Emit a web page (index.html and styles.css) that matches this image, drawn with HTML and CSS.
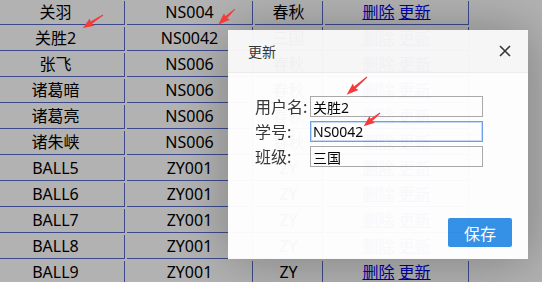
FILE: index.html
```html
<!DOCTYPE html>
<html lang="zh-CN">

<head>
    <meta charset="UTF-8">
    <meta name="viewport" content="width=device-width, initial-scale=1.0">
    <title>学生列表</title>
    <link rel="stylesheet" href="styles.css">
</head>

<body>
    <table id="list">
        <tr><td>关羽</td><td>NS004</td><td>春秋</td><td><a href="#">删除</a> <a href="#">更新</a></td></tr>
        <tr><td>关胜2</td><td>NS0042</td><td>三国</td><td><a href="#">删除</a> <a href="#">更新</a></td></tr>
        <tr><td>张飞</td><td>NS006</td><td>春秋</td><td><a href="#">删除</a> <a href="#">更新</a></td></tr>
        <tr><td>诸葛暗</td><td>NS006</td><td>春秋</td><td><a href="#">删除</a> <a href="#">更新</a></td></tr>
        <tr><td>诸葛亮</td><td>NS006</td><td>春秋</td><td><a href="#">删除</a> <a href="#">更新</a></td></tr>
        <tr><td>诸朱峡</td><td>NS006</td><td>春秋</td><td><a href="#">删除</a> <a href="#">更新</a></td></tr>
        <tr><td>BALL5</td><td>ZY001</td><td>ZY</td><td><a href="#">删除</a> <a href="#">更新</a></td></tr>
        <tr><td>BALL6</td><td>ZY001</td><td>ZY</td><td><a href="#">删除</a> <a href="#">更新</a></td></tr>
        <tr><td>BALL7</td><td>ZY001</td><td>ZY</td><td><a href="#">删除</a> <a href="#">更新</a></td></tr>
        <tr><td>BALL8</td><td>ZY001</td><td>ZY</td><td><a href="#">删除</a> <a href="#">更新</a></td></tr>
        <tr><td>BALL9</td><td>ZY001</td><td>ZY</td><td><a href="#">删除</a> <a href="#">更新</a></td></tr>
    </table>

    <!-- 遮罩 -->
    <div class="shade"></div>

    <!-- 弹层 -->
    <div class="layer">
        <div class="layer-title">
            <span>更新</span>
            <svg class="layer-close" width="12" height="12" viewBox="0 0 12 12">
                <path d="M1 1 L11 11 M11 1 L1 11" stroke="#333" stroke-width="1.6" />
            </svg>
        </div>
        <div class="layer-content">
            <div class="form">
                <label>用户名:</label>
                <input type="text" value="关胜2">
                <label>学号:</label>
                <input type="text" value="NS0042" class="focus">
                <label>班级:</label>
                <input type="text" value="三国">
            </div>
        </div>
        <div class="layer-btn">
            <button>保存</button>
        </div>
    </div>

    <!-- 标注箭头 -->
    <svg class="marks" width="542" height="282">
        <g fill="#f23c3c">
            <polygon transform="translate(103 15) rotate(147)" points="0,-0.5 14,-1.4 13,-4.3 24,0 13,4.3 14,1.4 0,0.5" />
            <polygon transform="translate(235 9) rotate(137)" points="0,-0.5 12,-1.4 11,-4.3 23,0 11,4.3 12,1.4 0,0.5" />
            <polygon transform="translate(367 77) rotate(139)" points="0,-0.5 16,-1.4 15,-4.3 27,0 15,4.3 16,1.4 0,0.5" />
            <polygon transform="translate(380 113) rotate(141)" points="0,-0.5 11,-1.4 10,-4.3 21,0 10,4.3 11,1.4 0,0.5" />
        </g>
    </svg>
</body>

</html>
```

FILE: styles.css
```css
* {
    margin: 0;
    padding: 0;
    box-sizing: border-box;
}

body {
    font-family: "Noto Sans", "Noto Sans CJK SC", sans-serif;
    background: #fff;
    overflow: hidden;
}

/* 列表 */
#list {
    border-spacing: 2px;
    margin: -1px 0 0 -15px;
    font-size: 16px;
    color: #000;
}

#list td {
    height: 24px;
    line-height: 23px;
    text-align: center;
    border-right: 1px solid #566ac8;
    border-bottom: 1px solid #566ac8;
    white-space: nowrap;
}

#list td:nth-child(1) {
    width: 138px;
}

#list td:nth-child(2) {
    width: 126px;
}

#list td:nth-child(3) {
    width: 68px;
}

#list td:nth-child(4) {
    width: 144px;
}

#list a {
    color: #0000ee;
}

.shade {
    position: fixed;
    top: 0;
    left: 0;
    right: 0;
    bottom: 0;
    background: rgba(0, 0, 0, 0.3);
}

/* 弹层 */
.layer {
    position: fixed;
    left: 228px;
    top: 30px;
    width: 300px;
    height: 229px;
    background: #fff;
    box-shadow: 1px 1px 50px rgba(0, 0, 0, 0.3);
    opacity: 0.97;
    display: flex;
    flex-direction: column;
    font-family: "Noto Sans CJK SC", sans-serif;
}

.layer-title {
    height: 43px;
    padding: 0 17px 0 20px;
    background: #f8f8f8;
    border-bottom: 1px solid #eee;
    display: flex;
    align-items: center;
    justify-content: space-between;
    font-size: 14px;
    color: #333;
}

.layer-content {
    flex: 1;
    padding: 23px 0 0 27px;
}

.form {
    display: grid;
    grid-template-columns: 55px 173px;
    row-gap: 4px;
    align-items: center;
    font-size: 16px;
    color: #333;
}

.form label {
    line-height: 21px;
}

.form input {
    height: 21px;
    border: 1px solid #a9a9a9;
    padding: 0 2px;
    font-size: 14px;
    font-family: "Noto Sans", "Noto Sans CJK SC", sans-serif;
    color: #000;
    outline: none;
}

.form input.focus {
    border-color: #6b9ee8;
    box-shadow: inset 0 0 0 1px #c6dcf8;
}

.layer-btn {
    display: flex;
    justify-content: flex-end;
    padding: 0 16px 12px 0;
}

.layer-btn button {
    width: 64px;
    height: 29px;
    border: none;
    border-radius: 2px;
    background: #3190e8;
    color: #fff;
    font-size: 16px;
    font-family: "Noto Sans CJK SC", sans-serif;
}

.marks {
    position: fixed;
    top: 0;
    left: 0;
    pointer-events: none;
}
```
